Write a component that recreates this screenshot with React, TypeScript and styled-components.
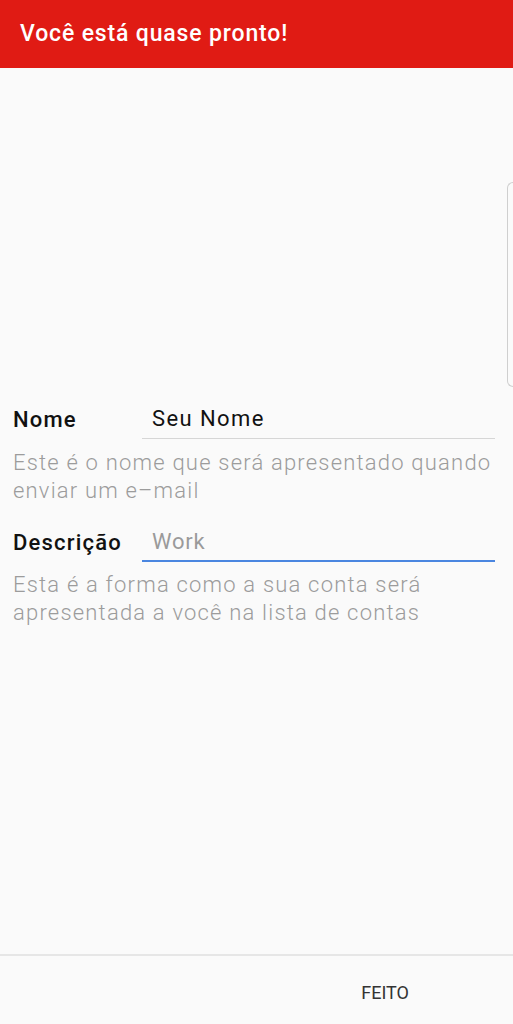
import React from "react";
import styled, { createGlobalStyle } from "styled-components";

const GlobalStyle = createGlobalStyle`
  html, body {
    margin: 0;
    padding: 0;
    background: #fafafa;
  }
  body {
    font-family: Roboto, "Noto Sans", sans-serif;
  }
`;

const Screen = styled.div`
  position: relative;
  display: flex;
  flex-direction: column;
  width: 513px;
  height: 1024px;
  background: #fafafa;
  overflow: hidden;
`;

const Header = styled.header`
  display: flex;
  align-items: center;
  height: 68px;
  padding: 0 20px;
  background: #e01b14;
  flex-shrink: 0;
`;

const Title = styled.h1`
  margin: 0;
  padding-bottom: 2px;
  font-size: 23px;
  font-weight: 500;
  color: #fff;
  letter-spacing: 0.85px;
`;

const Content = styled.main`
  flex: 1;
  padding: 337px 18px 0 13px;
`;

const FieldRow = styled.div<{ $first?: boolean }>`
  display: flex;
  align-items: flex-end;
  margin-top: ${({ $first }) => ($first ? "0" : "23px")};
`;

const Label = styled.label`
  width: 129px;
  flex-shrink: 0;
  font-size: 22px;
  line-height: 28px;
  font-weight: 500;
  letter-spacing: 1.2px;
  color: #111;
  padding-bottom: 5px;
`;

const Input = styled.div<{ $focused?: boolean; $placeholder?: boolean }>`
  flex: 1;
  padding: 0 0 ${({ $focused }) => ($focused ? "4px" : "5px")} 10px;
  font-size: 22px;
  line-height: 28px;
  font-weight: 400;
  letter-spacing: ${({ $placeholder }) => ($placeholder ? "0.8px" : "1.4px")};
  color: ${({ $placeholder }) => ($placeholder ? "#9a9a9a" : "#111")};
  border-bottom: ${({ $focused }) =>
    $focused ? "2px solid #4a86e0" : "1px solid #d6d6d6"};
`;

const Helper = styled.p<{ $gap: number }>`
  margin: ${({ $gap }) => $gap}px 0 0;
  font-size: 22px;
  line-height: 28px;
  font-weight: 300;
  letter-spacing: 1.2px;
  color: #9c9c9c;
`;

const EdgeHandle = styled.div`
  position: absolute;
  top: 182px;
  right: 0;
  width: 5px;
  height: 203px;
  border: 1px solid #cfcfcf;
  border-right: none;
  border-radius: 7px 0 0 7px;
`;

const Footer = styled.footer`
  display: flex;
  align-items: center;
  justify-content: flex-end;
  height: 68px;
  padding-right: 104px;
  border-top: 2px solid #e6e6e6;
  flex-shrink: 0;
`;

const DoneButton = styled.button`
  border: none;
  background: none;
  padding: 0;
  margin-top: 5px;
  font-family: Roboto, sans-serif;
  font-size: 18px;
  font-weight: 400;
  color: #333;
`;

export default function App() {
  return (
    <Screen>
      <GlobalStyle />
      <Header>
        <Title>Você está quase pronto!</Title>
      </Header>
      <Content>
        <FieldRow $first>
          <Label>Nome</Label>
          <Input>Seu Nome</Input>
        </FieldRow>
        <Helper $gap={10}>
          Este é o nome que será apresentado quando enviar um e–mail
        </Helper>
        <FieldRow>
          <Label>Descrição</Label>
          <Input $focused $placeholder>
            Work
          </Input>
        </FieldRow>
        <Helper $gap={9}>
          Esta é a forma como a sua conta será apresentada a você na lista de
          contas
        </Helper>
      </Content>
      <EdgeHandle />
      <Footer>
        <DoneButton>FEITO</DoneButton>
      </Footer>
    </Screen>
  );
}
